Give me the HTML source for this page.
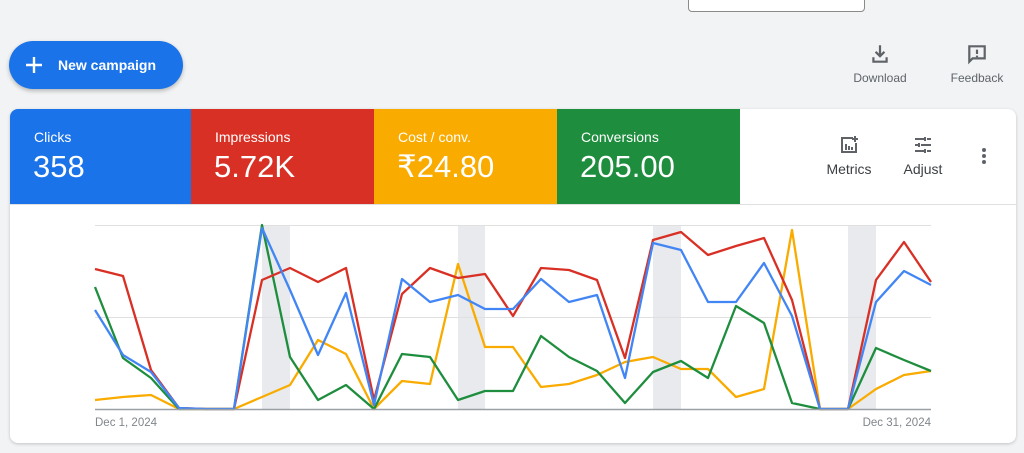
<!DOCTYPE html>
<html><head><meta charset="utf-8"><style>
*{margin:0;padding:0;box-sizing:border-box}
body{width:1024px;height:453px;background:#f1f3f4;font-family:"Liberation Sans",sans-serif;position:relative;overflow:hidden}
.topbox{position:absolute;left:688px;top:-4px;width:177px;height:16px;border:1px solid #8a8a8a;border-radius:4px;background:#fff}
.btn{position:absolute;left:9px;top:41px;width:174px;height:48px;border-radius:24px;background:#1a73e8;color:#fff;font-size:14px;font-weight:bold;box-shadow:0 2px 4px rgba(0,0,0,.25)}
.btn span{position:absolute;left:49px;top:16px}
.tool{position:absolute;top:43px;font-size:12px;color:#5f6368;text-align:center}
.card{position:absolute;left:10px;top:109px;width:1006px;height:334px;background:#fff;border-radius:8px;box-shadow:0 1px 3px rgba(0,0,0,.2);overflow:hidden}
.tile{position:absolute;top:0;height:95px;color:#fff}
.tile .l{position:absolute;left:24px;top:20px;font-size:14px}
.tile .v{position:absolute;left:23px;top:40px;font-size:31px}
.act{position:absolute;font-size:14px;color:#3c4043;text-align:center}
</style></head><body>
<div class="topbox"></div>
<div class="btn"><svg style="position:absolute;left:16px;top:15px" width="18" height="18"><path d="M9 1v16M1 9h16" stroke="#fff" stroke-width="2.4"/></svg><span>New campaign</span></div>
<div class="tool" style="left:849px;width:62px"><svg width="22" height="22" viewBox="0 0 20 20"><path d="M10 2v10M6 8l4 4 4-4M4 13v4h12v-4" stroke="#5f6368" stroke-width="2" fill="none"/></svg><div style="margin-top:3px">Download</div></div>
<div class="tool" style="left:946px;width:62px"><svg width="22" height="22" viewBox="0 0 20 20"><path d="M3 3h14v11H6l-3 3z" stroke="#5f6368" stroke-width="2" fill="none"/><path d="M10 6v4M10 11.5v1.5" stroke="#5f6368" stroke-width="2"/></svg><div style="margin-top:3px">Feedback</div></div>
<div class="card">
<div class="tile" style="left:0;width:181px;background:#1a73e8"><div class="l">Clicks</div><div class="v">358</div></div>
<div class="tile" style="left:181px;width:183px;background:#d93025"><div class="l">Impressions</div><div class="v">5.72K</div></div>
<div class="tile" style="left:364px;width:183px;background:#f9ab00"><div class="l">Cost / conv.</div><div class="v">₹24.80</div></div>
<div class="tile" style="left:547px;width:183px;background:#1e8e3e"><div class="l">Conversions</div><div class="v">205.00</div></div>
<div style="position:absolute;left:0;top:95px;width:1006px;border-top:1px solid #e0e0e0"></div>
<div class="act" style="left:811px;top:26px;width:56px"><svg width="20" height="20" viewBox="0 0 20 20"><path d="M14 3H3v14h14V8" stroke="#5f6368" stroke-width="2" fill="none"/><path d="M7 9v6M10 11v4M13 12v3M16 1v6M13 4h6" stroke="#5f6368" stroke-width="2"/></svg><div style="margin-top:3px">Metrics</div></div>
<div class="act" style="left:886px;top:26px;width:54px"><svg width="20" height="20" viewBox="0 0 20 20"><path d="M2 4h10M14 4h4M2 10h4M8 10h10M2 16h10M14 16h4M12 2v4M6 8v4M12 14v4" stroke="#5f6368" stroke-width="2"/></svg><div style="margin-top:3px">Adjust</div></div>
<svg style="position:absolute;left:968px;top:38px" width="12" height="20"><circle cx="6" cy="3" r="2" fill="#5f6368"/><circle cx="6" cy="9" r="2" fill="#5f6368"/><circle cx="6" cy="15" r="2" fill="#5f6368"/></svg>
</div>
<svg style="position:absolute;left:0;top:0" width="1024" height="453">
<g fill="#e8eaed"><rect x="262" y="225" width="28" height="184"/><rect x="458" y="225" width="27" height="184"/><rect x="653" y="225" width="28" height="184"/><rect x="848" y="225" width="28" height="184"/></g>
<path d="M95 225.5H931M95 317.5H931" stroke="#e0e0e0"/>
<g fill="none" stroke-width="2.3" stroke-linejoin="round">
<polyline stroke="#f9ab00" points="95,400 123,397 151,395 179,409 206,409 234,409 262,397 290,385 318,340 346,354 374,409 402,381 430,384 458,264 485,347 513,347 541,387 569,384 597,375 625,362 653,357 681,369 708,369 736,397 764,389 792,230 820,409 848,409 876,389 904,375 931,371"/>
<polyline stroke="#1e8e3e" points="95,287 123,358 151,378 179,409 206,409 234,409 262,225 290,357 318,400 346,385 374,409 402,354 430,357 458,400 485,391 513,391 541,336 569,357 597,371 625,403 653,372 681,361 708,378 736,306 764,323 792,403 820,409 848,409 876,348 904,360 931,371"/>
<polyline stroke="#d93025" points="95,269 123,276 151,370 179,408 206,409 234,409 262,280 290,268 318,282 346,268 374,400 402,294 430,268 458,278 485,274 513,316 541,268 569,270 597,280 625,358 653,240 681,232 708,255 736,246 764,238 792,300 820,409 848,409 876,280 904,242 931,282"/>
<polyline stroke="#4285f4" points="95,310 123,355 151,372 179,408 206,409 234,409 262,228 290,290 318,355 346,293 374,405 402,279 430,302 458,295 485,309 513,309 541,279 569,302 597,295 625,378 653,243 681,250 708,302 736,302 764,263 792,316 820,409 848,409 876,302 904,271 931,285"/>
</g>
<path d="M95 409.5H931" stroke="#9aa0a6" stroke-width="1.5"/>
<text x="95" y="426" font-size="11.5" fill="#80868b" font-family="Liberation Sans">Dec 1, 2024</text>
<text x="931" y="426" font-size="11.5" fill="#80868b" text-anchor="end" font-family="Liberation Sans">Dec 31, 2024</text>
</svg>
</body></html>
